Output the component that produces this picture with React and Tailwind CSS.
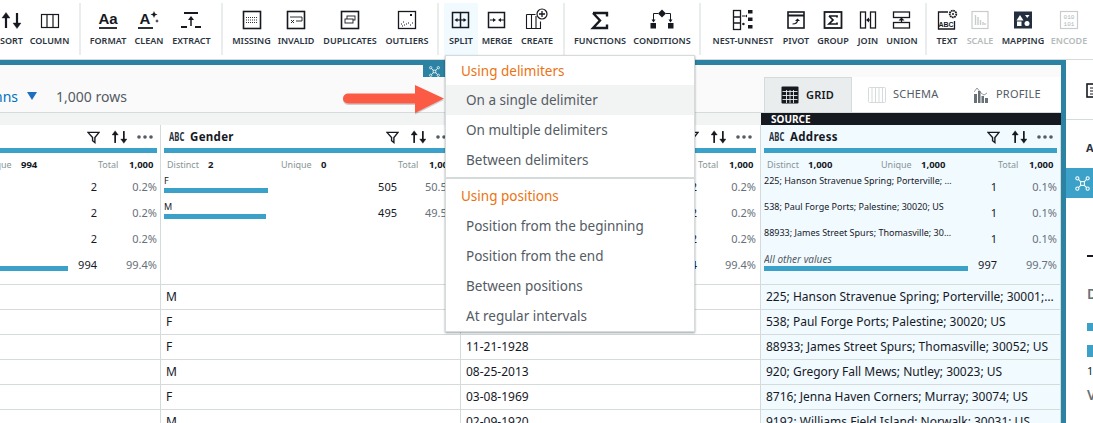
import React from "react";

const ink = "#16191f";

const Ico = ({ children, color = ink }) => (
  <svg width="24" height="24" viewBox="0 0 24 24" fill="none" stroke={color} strokeWidth="1.2" className="block">
    {children}
  </svg>
);

const SortGlyph = () => (
  <g stroke={ink} strokeWidth="2.2" fill={ink}>
    <path d="M6 20V7" />
    <path d="M2 10 6 4.500 10 10z" strokeWidth="0.4" />
    <path d="M17 5v13" />
    <path d="M13 15 17 20.500 21 15z" strokeWidth="0.4" />
  </g>
);

const icons = {
  sort: <Ico><SortGlyph /></Ico>,
  column: <Ico><rect x="3.5" y="6.5" width="17" height="13" /><path d="M9 6.5v13M15 6.5v13" /></Ico>,
  format: (
    <Ico>
      <text x="12" y="16" textAnchor="middle" fontSize="15" fontWeight="700" fontFamily="Liberation Sans" fill={ink} stroke="none">Aa</text>
      <path d="M3 20h18" strokeWidth="1.8" />
    </Ico>
  ),
  clean: (
    <Ico>
      <text x="8" y="16" textAnchor="middle" fontSize="15" fontWeight="700" fontFamily="Liberation Sans" fill={ink} stroke="none">A</text>
      <path d="M1 20h15" strokeWidth="1.8" />
      <path d="M17 3l1 2.5 2.5 1-2.5 1-1 2.5-1-2.5-2.500-1 2.500-1zM20 11l.6 1.400 1.400.6-1.400.6-.6 1.400-.6-1.400-1.400-.6 1.400-.6z" fill={ink} stroke="none" />
    </Ico>
  ),
  extract: (
    <Ico>
      <path d="M4 5h14" strokeWidth="2" />
      <path d="M11 18V10" strokeWidth="1.5" />
      <path d="M8 12l3-4 3 4z" fill={ink} stroke="none" />
      <path d="M1 19h6M15 19h6" strokeWidth="2" />
    </Ico>
  ),
  missing: (
    <Ico>
      <rect x="3.500" y="3.500" width="17" height="17" strokeWidth="1.600" />
      <path d="M6 9.500h12M6 12h12M6 14.500h12" strokeDasharray="1 1" strokeWidth="0.9" />
    </Ico>
  ),
  invalid: (
    <Ico>
      <rect x="3.500" y="3.500" width="17" height="17" strokeWidth="1.600" />
      <path d="M6 9h12v4h-6" strokeWidth="0.9" />
      <path d="M7 12l3 3M10 12l-3 3" strokeWidth="0.9" />
    </Ico>
  ),
  duplicates: (
    <Ico>
      <rect x="3.500" y="3.500" width="17" height="17" strokeWidth="1.600" />
      <rect x="9" y="8" width="8" height="4" strokeWidth="0.9" />
      <rect x="7" y="11" width="8" height="4" fill="#fff" strokeWidth="0.9" />
    </Ico>
  ),
  outliers: (
    <Ico>
      <rect x="3.500" y="3.500" width="17" height="17" strokeWidth="1.300" />
      <rect x="15" y="6" width="2" height="2" fill={ink} stroke="none" />
      <path d="M6 16h1M8 14h1M9 17h1M7 18h1M13 15h1M15 17h1M17 15h1M11 16h1" strokeWidth="1" />
    </Ico>
  ),
  split: (
    <Ico>
      <rect x="3.500" y="4.500" width="16" height="15" strokeWidth="1.500" />
      <path d="M11.500 4.500v15" strokeWidth="1.500" />
      <path d="M5.500 12l3-2v4zM17.500 12l-3-2v4z" fill={ink} stroke="none" />
      <path d="M8 12h7" />
    </Ico>
  ),
  merge: (
    <Ico>
      <rect x="3.500" y="4.500" width="16" height="15" strokeWidth="1.500" />
      <path d="M11 12l-3-2v4zM13 12l3-2v4z" fill={ink} stroke="none" />
      <path d="M5 12h3M16 12h3" />
    </Ico>
  ),
  create: (
    <Ico>
      <path d="M1.500 6.500h9M1.500 6.500v14h14v-7M6.500 6.500v14M11 8v12.500" strokeWidth="1.100" />
      <circle cx="17" cy="6" r="5" fill="#fff" strokeWidth="1.200" />
      <path d="M17 3v6M14 6h6" strokeWidth="1.300" />
    </Ico>
  ),
  functions: <Ico><path d="M5 5h14v3.500M5 5l7 7.500-7 7.500h14v-3.500" strokeWidth="2.400" /></Ico>,
  conditions: (
    <Ico>
      <path d="M12 1.500l4 4-4 4-4-4z" fill={ink} stroke="none" />
      <path d="M8 5.500H3.500v7M16 5.500h4.500v7" strokeWidth="1" />
      <path d="M1.500 11.500h4l-2 3zM18.500 11.500h4l-2 3z" fill={ink} stroke="none" />
      <rect x="0.500" y="15" width="5.500" height="5.500" fill={ink} stroke="none" />
      <rect x="18" y="15" width="5.500" height="5.500" fill={ink} stroke="none" />
    </Ico>
  ),
  nest: (
    <Ico>
      <rect x="2.500" y="2.500" width="7" height="19" strokeWidth="1.300" />
      <path d="M2.500 9h7M2.500 15h7" strokeWidth="1.300" />
      <path d="M11 8h3M11 16h3" strokeWidth="1" />
      <path d="M14 8l2-1.500v3zM11 16l2-1.500v3z" fill={ink} stroke="none" />
      <rect x="17" y="2" width="4.500" height="3.500" fill={ink} stroke="none" />
      <rect x="17" y="9.500" width="4.500" height="3.500" fill={ink} stroke="none" />
      <rect x="17" y="17" width="4.500" height="3.500" fill={ink} stroke="none" />
    </Ico>
  ),
  pivot: (
    <Ico>
      <rect x="4" y="4" width="16" height="16" strokeWidth="1.600" />
      <path d="M4 7.500h16" strokeWidth="2" />
      <path d="M8.500 16c3 0 5-1 5-4" strokeWidth="1.200" />
      <path d="M11 13l2.500-2.500 2.500 2.500z" fill={ink} stroke="none" />
    </Ico>
  ),
  group: (
    <Ico>
      <rect x="3.500" y="4" width="17" height="16" strokeWidth="1.800" />
      <path d="M8 8h8v1.500M8 8l4 4-4 4h8v-1.500" strokeWidth="1.700" />
    </Ico>
  ),
  join: (
    <Ico>
      <rect x="4.500" y="4" width="5" height="16" strokeWidth="1.300" />
      <rect x="14.500" y="4" width="5" height="16" strokeWidth="1.300" />
      <path d="M14 12H11" strokeWidth="1.200" />
      <path d="M10 12l3-2.500v5z" fill={ink} stroke="none" />
    </Ico>
  ),
  union: (
    <Ico>
      <rect x="3.500" y="4" width="16" height="5.500" strokeWidth="1.300" />
      <rect x="3.500" y="14.500" width="16" height="5.500" strokeWidth="1.300" />
      <path d="M11.500 14V11" strokeWidth="1.200" />
      <path d="M11.500 9.500l3 3h-6z" fill={ink} stroke="none" />
    </Ico>
  ),
  text: (
    <Ico>
      <path d="M13 4H3.500v17h16v-8" strokeWidth="1.300" />
      <text x="11" y="18.500" textAnchor="middle" fontSize="7" fontWeight="700" fontFamily="Liberation Sans" fill={ink} stroke="none">ABC</text>
      <circle cx="18" cy="6" r="3.300" fill="#fff" strokeWidth="1.800" strokeDasharray="1.600 0.600" />
      <circle cx="18" cy="6" r="1" fill={ink} stroke="none" />
    </Ico>
  ),
  scale: (
    <Ico color="#c8cccc">
      <rect x="4" y="3.500" width="16" height="17" />
      <path d="M7.500 7v10M10 9v8M12.500 12v5M15 14v3M17 15v2" strokeWidth="1.400" />
    </Ico>
  ),
  mapping: (
    <Ico>
      <rect x="3" y="3.500" width="18" height="17" fill="#232f3e" stroke="none" />
      <path d="M9 7l3.500 5.500h-7z" fill="#fff" stroke="none" />
      <path d="M14 7h4.500l-2.200 3z" fill="#fff" stroke="none" />
      <rect x="6" y="13.500" width="4.500" height="4.500" fill="#fff" stroke="none" />
      <circle cx="16" cy="15.500" r="2.500" fill="#fff" stroke="none" />
    </Ico>
  ),
  encode: (
    <Ico color="#c8cccc">
      <rect x="3.500" y="3.500" width="17" height="17" />
      <text x="12" y="11" textAnchor="middle" fontSize="6" fontFamily="Liberation Mono" fill="#aab7b8" stroke="none">010</text>
      <text x="12" y="17.500" textAnchor="middle" fontSize="6" fontFamily="Liberation Mono" fill="#aab7b8" stroke="none">101</text>
    </Ico>
  ),
};

const toolbarGroups = [
  { cls: "-ml-[8px] pr-[11px]", items: [
    { label: "SORT", icon: "sort", w: "w-[39px]" },
    { label: "COLUMN", icon: "column", w: "w-[37px]" },
  ] },
  { cls: "pl-[7px] pr-[8px]", items: [
    { label: "FORMAT", icon: "format", w: "w-[40px]" },
    { label: "CLEAN", icon: "clean", w: "w-[42px]" },
    { label: "EXTRACT", icon: "extract", w: "w-[43px]" },
  ] },
  { cls: "pl-[5px] pr-[6px]", items: [
    { label: "MISSING", icon: "missing", w: "w-[47px]" },
    { label: "INVALID", icon: "invalid", w: "w-[42px]" },
    { label: "DUPLICATES", icon: "duplicates", w: "w-[66px]" },
    { label: "OUTLIERS", icon: "outliers", w: "w-[48px]" },
  ] },
  { cls: "pl-[5px] pr-[5px]", items: [
    { label: "SPLIT", icon: "split", w: "w-[34px]", active: true },
    { label: "MERGE", icon: "merge", w: "w-[38px]" },
    { label: "CREATE", icon: "create", w: "w-[42px]" },
  ] },
  { cls: "pl-[6px] pr-[4px]", items: [
    { label: "FUNCTIONS", icon: "functions", w: "w-[58px]" },
    { label: "CONDITIONS", icon: "conditions", w: "w-[66px]" },
  ] },
  { cls: "pl-[8px] pr-[6px]", items: [
    { label: "NEST-UNNEST", icon: "nest", w: "w-[68px]" },
    { label: "PIVOT", icon: "pivot", w: "w-[38px]" },
    { label: "GROUP", icon: "group", w: "w-[36px]" },
    { label: "JOIN", icon: "join", w: "w-[34px]" },
    { label: "UNION", icon: "union", w: "w-[34px]" },
  ] },
  { cls: "pl-[5px]", last: true, items: [
    { label: "TEXT", icon: "text", w: "w-[30px]" },
    { label: "SCALE", icon: "scale", w: "w-[36px]", off: true },
    { label: "MAPPING", icon: "mapping", w: "w-[50px]" },
    { label: "ENCODE", icon: "encode", w: "w-[42px]", off: true },
  ] },
];

const ToolItem = ({ label, icon, w, active, off }) => (
  <div className={`${w} shrink-0 h-[52px] flex flex-col items-center pt-[5px] ${active ? "bg-[#f1faff]" : ""}`}>
    {icons[icon]}
    <span className={`mt-[3px] text-[9px] leading-[12px] font-semibold whitespace-nowrap ${off ? "text-[#b4babb]" : "text-[#2b3440]"}`}>
      {label}
    </span>
  </div>
);

const Toolbar = () => (
  <div className="h-[60px] shrink-0 flex pt-[3px] border-b border-[#d5dbdb] bg-white overflow-hidden">
    {toolbarGroups.map((g, i) => (
      <div key={i} className={`flex shrink-0 h-[52px] ${g.cls} ${g.last ? "" : "border-r-2 border-[#eaeded]"}`}>
        {g.items.map((it) => <ToolItem key={it.label} {...it} />)}
      </div>
    ))}
  </div>
);

const ColIcons = () => (
  <div className="flex items-center ml-auto w-[66px] mr-[8px] shrink-0">
    <svg width="13" height="14" viewBox="0 0 14 14" fill="none" stroke={ink} strokeWidth="1.500" className="shrink-0">
      <path d="M1 2h12L8.500 7.500V13L6 11V7.500z" />
    </svg>
    <svg width="15" height="14" viewBox="2 4 19 17" className="block ml-[12px] shrink-0"><SortGlyph /></svg>
    <svg width="16" height="4" viewBox="0 0 16 4" fill="#545b64" className="ml-[10px] shrink-0">
      <circle cx="2" cy="2" r="1.800" /><circle cx="8" cy="2" r="1.800" /><circle cx="14" cy="2" r="1.800" />
    </svg>
  </div>
);

const Abc = () => (
  <span className="inline-block w-[16px] text-[12px] font-bold text-[#2b3440] scale-x-[0.64] origin-left whitespace-nowrap">ABC</span>
);

const Stat = ({ label, value, w, lw }) => (
  <div className={`flex ${w} shrink-0`}>
    <span className={`text-[#879596] ${lw} shrink-0 whitespace-nowrap`}>{label}</span>
    <span className="font-bold text-[9.5px] text-[#16191f] whitespace-nowrap">{value}</span>
  </div>
);

const ValueRow = ({ label, count, pct, bar, italic }) => (
  <div className="h-[26px] flex pl-[3px] pr-[4px]">
    <div className="w-[203px] shrink-0 min-w-0">
      <div className={`h-[16px] leading-[18px] w-[190px] whitespace-nowrap overflow-hidden text-ellipsis ${italic ? "italic text-[10px] text-[#545b64]" : "text-[9px] text-[#16191f]"}`}>{label}</div>
      {bar && <div className="h-[5px] bg-[#3ba1c8]" style={{ width: bar }} />}
    </div>
    <div className="w-[30px] shrink-0 text-right text-[11px] leading-[24px] text-[#16191f] pt-[3px]">{count}</div>
    <div className="flex-1 text-right text-[11px] leading-[24px] text-[#687078] pt-[3px]">{pct}</div>
  </div>
);

const Column = ({ title, stats, rows, cells, wrap, inner, tint }) => (
  <div className={`${wrap} h-full shrink-0 overflow-hidden border-r border-[#d5dbdb] ${tint ? "bg-[#f1faff]" : "bg-white"}`}>
    <div className={inner}>
      <div className="h-[23px] flex items-center pl-[8px] pt-[1px]">
        <Abc />
        <span className="ml-[5px] text-[11.500px] tracking-[0.3px] font-bold text-[#16191f]">{title}</span>
        <ColIcons />
      </div>
      <div className="h-[5px] ml-[3px] mr-[4px] bg-[#3ba1c8]" />
      <div className="h-[19px] flex items-center pl-[6px] pt-[6px] text-[9px]">
        <Stat label="Distinct" value={stats[0]} w="w-[114px]" lw="w-[41px]" />
        <Stat label="Unique" value={stats[1]} w="w-[117px]" lw="w-[40px]" />
        <Stat label="Total" value="1,000" w="w-[60px]" lw="w-[31px]" />
      </div>
      <div className="h-[112px]">
        {rows.map((r, i) => <ValueRow key={i} {...r} />)}
      </div>
      {cells.map((c, i) => (
        <div key={i} className="h-[25px] border-t border-[#d5dbdb] pl-[5px] pr-[6px] text-[12px] leading-[24px] text-[#16191f] whitespace-nowrap overflow-hidden text-ellipsis">
          {c}
        </div>
      ))}
    </div>
  </div>
);

const birthRows = [
  { label: "01-02-1950", count: "2", pct: "0.2%" },
  { label: "05-14-1977", count: "2", pct: "0.2%" },
  { label: "09-30-2001", count: "2", pct: "0.2%" },
  { label: "All other values", count: "994", pct: "99.4%", bar: 204, italic: true },
];

const genderRows = [
  { label: "F", count: "505", pct: "50.5%", bar: 104 },
  { label: "M", count: "495", pct: "49.5%", bar: 102 },
];

const addressRows = [
  { label: "225; Hanson Stravenue Spring; Porterville; 30001; US", count: "1", pct: "0.1%" },
  { label: "538; Paul Forge Ports; Palestine; 30020; US", count: "1", pct: "0.1%" },
  { label: "88933; James Street Spurs; Thomasville; 30052; US", count: "1", pct: "0.1%" },
  { label: "All other values", count: "997", pct: "99.7%", bar: 204, italic: true },
];

const Tabs = () => (
  <div className="w-[297px] h-[35px] flex self-end bg-white text-[11px] tracking-[0.2px] text-[#545b64]">
    <div className="w-[88px] flex items-center pl-[16px] gap-[7px] bg-[#eaeded] border-x border-t border-[#d5dbdb] font-semibold text-[#16191f]">
      <svg width="18" height="18" viewBox="0 0 18 18" fill={ink}>
        <rect x="0.500" y="0.500" width="17" height="17" rx="1" />
        <path d="M1.500 5.500h15M1.500 9.500h15M1.500 13.500h15M5.500 4v13M9 4v13M12.500 4v13" stroke="#eaeded" strokeWidth="0.900" />
      </svg>
      GRID
    </div>
    <div className="w-[107px] flex items-center pl-[16px] gap-[7px]">
      <svg width="18" height="16" viewBox="0 0 18 16" fill="none" stroke="#d5dbdb" strokeWidth="1">
        <rect x="0.500" y="0.500" width="17" height="15" rx="1" />
        <path d="M4 1v14M7.500 1v14M11 1v14M14.500 1v14" />
      </svg>
      SCHEMA
    </div>
    <div className="flex items-center pl-[15px] gap-[8px]">
      <svg width="14" height="16" viewBox="0 0 14 16" fill="#687078">
        <rect x="0" y="7" width="3" height="9" /><rect x="4" y="4" width="2.500" height="12" />
        <rect x="7.500" y="9" width="2.500" height="7" /><rect x="11" y="11" width="3" height="5" />
        <path d="M0 5l3-4 4 5 3 2 3-2" fill="none" stroke="#687078" strokeWidth="0.700" />
      </svg>
      PROFILE
    </div>
  </div>
);

const NetworkIcon = ({ size = 14 }) => (
  <svg width={size} height={size} viewBox="0 0 16 16" fill="none" stroke="#fff" strokeWidth="1.100">
    <circle cx="2.500" cy="2.500" r="1.700" /><circle cx="13.500" cy="2.500" r="1.700" />
    <circle cx="2.500" cy="13.500" r="1.700" /><circle cx="13.500" cy="13.500" r="1.700" />
    <rect x="6" y="6" width="4" height="4" />
    <path d="M3.700 3.700 6 6M12.300 3.700 10 6M3.700 12.300 6 10M12.300 12.300 10 10" />
  </svg>
);

const MenuRow = ({ children, active }) => (
  <div className={`h-[30px] flex items-center pl-[20px] text-[13.500px] text-[#545b64] ${active ? "bg-[#f2f3f3]" : ""}`}>{children}</div>
);

const SplitMenu = () => (
  <div className="absolute left-[445px] top-[55px] w-[250px] h-[277px] bg-white border border-[#d5dbdb] shadow-[0_1px_2px_rgba(0,28,36,0.4)] pt-[1px] z-20">
    <div className="h-[28px] flex items-center pl-[15px] text-[13.500px] text-[#ec7211]">Using delimiters</div>
    <MenuRow active>On a single delimiter</MenuRow>
    <MenuRow>On multiple delimiters</MenuRow>
    <MenuRow>Between delimiters</MenuRow>
    <div className="mt-[2px] h-[2px] bg-[#d5dbdb]" />
    <div className="h-[32px] flex items-center pl-[15px] pt-[2px] text-[13.500px] text-[#ec7211]">Using positions</div>
    <MenuRow>Position from the beginning</MenuRow>
    <MenuRow>Position from the end</MenuRow>
    <MenuRow>Between positions</MenuRow>
    <MenuRow>At regular intervals</MenuRow>
  </div>
);

const Arrow = () => (
  <svg className="absolute left-[340px] top-[82px] z-30" width="106" height="34" viewBox="0 0 106 34">
    <path d="M8 11.500h67V3l29 13.500L75 31v-9.500H8a5 5 0 0 1 0-10z" fill="#000" opacity="0.18" transform="translate(0 1.500)" />
    <path d="M8 11.500h67V3l29 13.500L75 31v-9.500H8a5 5 0 0 1 0-10z" fill="#fb5a45" />
  </svg>
);

const SidePanel = () => (
  <div className="flex-1 min-w-0 bg-white overflow-hidden">
    <div className="h-[60px] flex items-center pl-[20px] pt-[2px] border-b border-[#d5dbdb]">
      <svg width="16" height="15" viewBox="0 0 16 15" fill="none" stroke={ink} strokeWidth="1.600" className="shrink-0">
        <rect x="1" y="1" width="16" height="13" /><path d="M4 5h12M4 8h12M4 11h12" strokeWidth="1.200" />
      </svg>
    </div>
    <div className="h-[48px] pl-[20px] pt-[20px] text-[11px] font-bold text-[#2b3440] whitespace-nowrap">ALL</div>
    <div className="h-[30px] flex items-center pl-[9px] bg-[#3ba1c8]">
      <NetworkIcon size={15} />
    </div>
    <div className="ml-[21px] mt-[57px] h-[2px] bg-[#16191f]" />
    <div className="mt-[27px] h-[20px] leading-[20px] pl-[21px] text-[14px] font-semibold text-[#687078] whitespace-nowrap">Details</div>
    <div className="ml-[21px] mt-[19px] h-[8px] bg-[#3ba1c8]" />
    <div className="ml-[21px] mt-[14px] h-[12px] bg-[#3ba1c8]" />
    <div className="mt-[6px] h-[16px] leading-[16px] pl-[21px] text-[11px] text-[#16191f]">1</div>
    <div className="mt-[6px] h-[20px] leading-[20px] pl-[21px] text-[14px] font-semibold text-[#687078] whitespace-nowrap">Values</div>
  </div>
);

export default function App() {
  return (
    <div className="relative h-[423px] w-[1093px] overflow-hidden bg-white flex flex-col font-['Noto_Sans',sans-serif]">
      <Toolbar />
      <div className="flex flex-1 min-h-0">
        <div className="relative w-[1066px] shrink-0 border-t-[5px] border-r-[5px] border-[#2b82a3] flex flex-col">
          <div className="absolute left-[423px] top-0 w-[22px] h-[12px] bg-[#2b82a3] flex items-center justify-center z-10">
            <NetworkIcon size={11} />
          </div>
          <div className="h-[48px] flex items-stretch bg-[#fafafa] border-b border-[#d5dbdb] shrink-0">
            <div className="w-[764px] flex items-center overflow-hidden pt-[15px]">
              <span className="-ml-[40px] text-[14px] text-[#0073bb]">Columns</span>
              <svg width="10" height="8" viewBox="0 0 10 8" className="ml-[9px] shrink-0"><path d="M0 0h10L5 8z" fill="#1f6fc0" /></svg>
              <span className="ml-[19px] text-[14px] text-[#545b64]">1,000 rows</span>
            </div>
            <Tabs />
          </div>
          <div className="h-[12px] flex bg-[#f2f3f3] shrink-0">
            <div className="w-[761px] shrink-0" />
            <div className="flex-1 bg-[#16191f] pl-[10px] text-[10px] leading-[12px] font-bold text-white">SOURCE</div>
          </div>
          <div className="flex flex-1 min-h-0">
            <Column
              wrap="w-[161px]" inner="w-[300px] -ml-[139px]" title="Birthdate"
              stats={["994", "994"]} rows={birthRows}
              cells={["", "", "", "", "", ""]}
            />
            <Column
              wrap="w-[300px]" inner="w-[299px]" title="Gender"
              stats={["2", "0"]} rows={genderRows}
              cells={["M", "F", "F", "M", "F", "M"]}
            />
            <Column
              wrap="w-[300px]" inner="w-[299px]" title="Birthdate"
              stats={["994", "994"]} rows={birthRows}
              cells={["", "", "11-21-1928", "08-25-2013", "03-08-1969", "02-09-1920"]}
            />
            <Column
              wrap="flex-1" inner="w-[300px]" title="Address" tint
              stats={["1,000", "1,000"]} rows={addressRows}
              cells={[
                "225; Hanson Stravenue Spring; Porterville; 30001; US",
                "538; Paul Forge Ports; Palestine; 30020; US",
                "88933; James Street Spurs; Thomasville; 30052; US",
                "920; Gregory Fall Mews; Nutley; 30023; US",
                "8716; Jenna Haven Corners; Murray; 30074; US",
                "9192; Williams Field Island; Norwalk; 30031; US",
              ]}
            />
          </div>
        </div>
        <SidePanel />
      </div>
      <SplitMenu />
      <Arrow />
    </div>
  );
}
